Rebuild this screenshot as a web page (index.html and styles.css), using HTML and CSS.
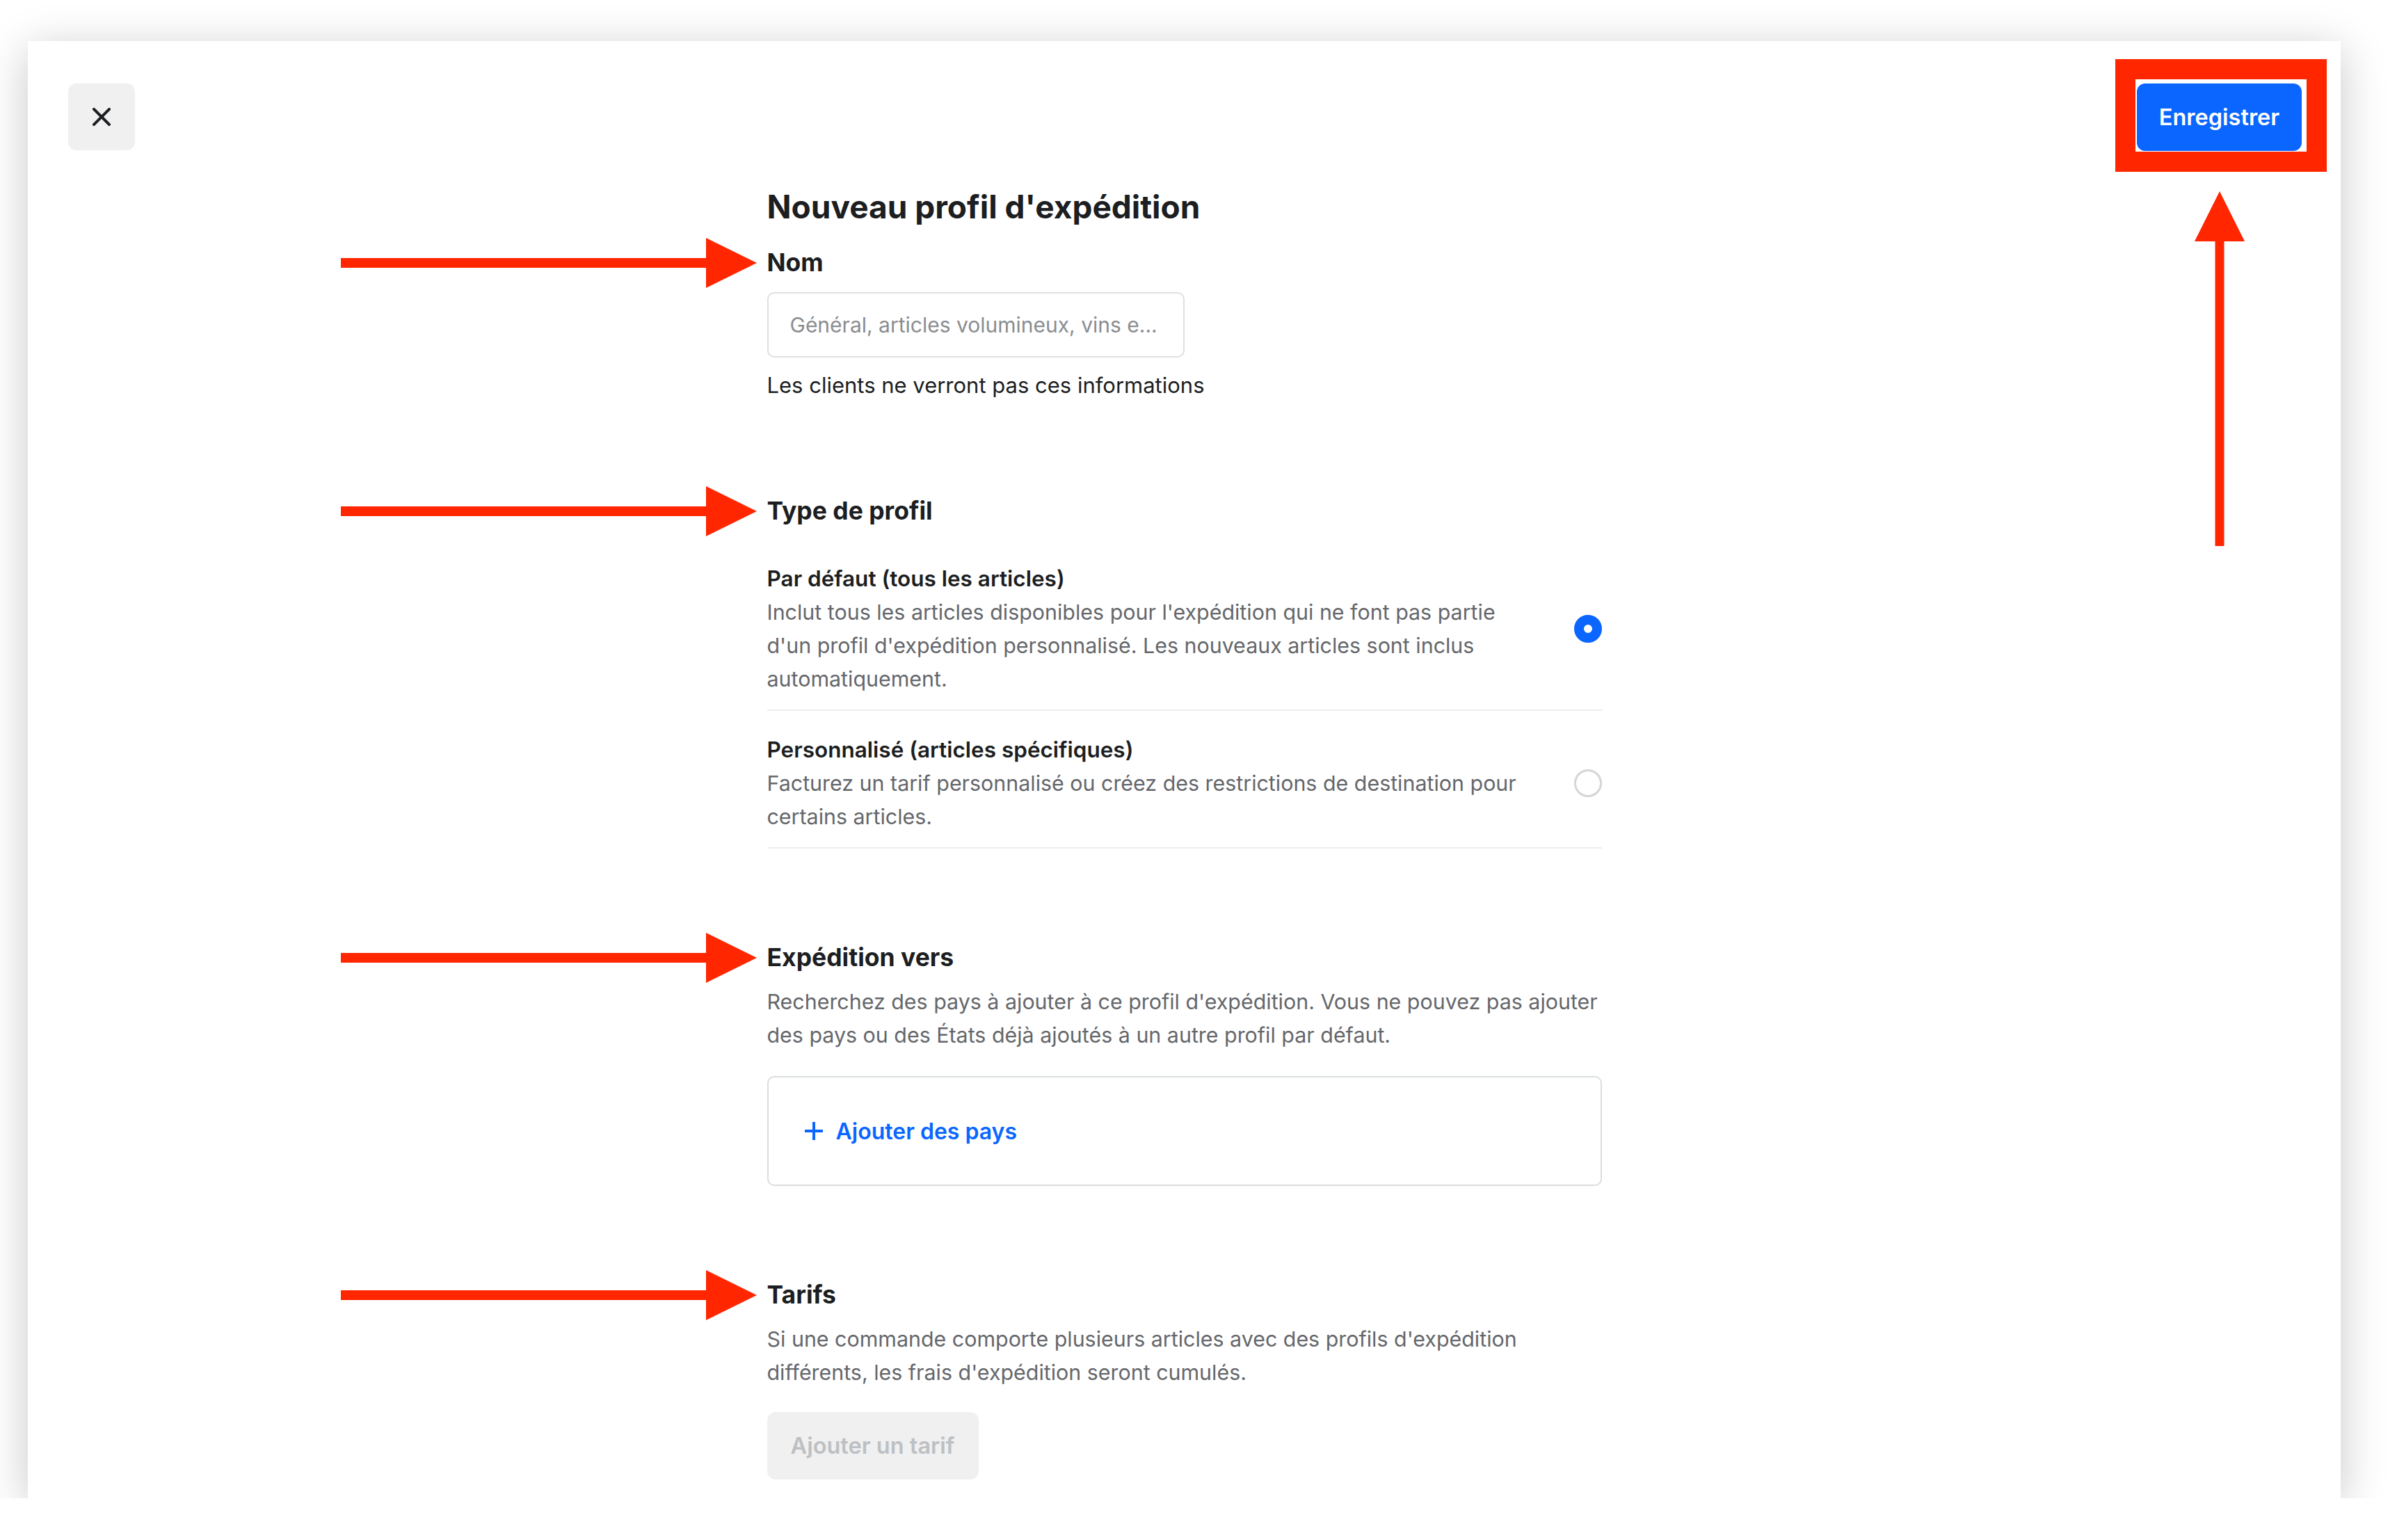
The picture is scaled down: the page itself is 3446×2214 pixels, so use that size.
FILE: index.html
```html
<!DOCTYPE html>
<html lang="fr">
<head>
  <meta charset="UTF-8" />
  <meta name="viewport" content="width=device-width, initial-scale=1.0"/>
  <title>Nouveau profil d'expédition</title>
  <link rel="stylesheet" href="styles.css">
</head>
<body>
  <div class="modal">
    <header class="topbar">
      <button class="close-btn" aria-label="Fermer">
        <svg width="26" height="26" viewBox="0 0 26 26">
          <path d="M2 2 L24 24 M24 2 L2 24" stroke="#1c1e21" stroke-width="4" stroke-linecap="square"/>
        </svg>
      </button>

      <div class="save-wrap">
        <button class="save-btn">Enregistrer</button>
        <span class="callout-frame"></span>
        <svg class="arrow-up" width="72" height="510" viewBox="0 0 72 510">
          <polygon points="36,0 72,72 0,72" fill="#ff2600"/>
          <rect x="29.5" y="70" width="13" height="440" fill="#ff2600"/>
        </svg>
      </div>
    </header>

    <main class="form">
      <h1 class="title">Nouveau profil d'expédition</h1>

      <label class="heading marked" for="profileName">
        <svg class="arrow-left" width="598" height="72" viewBox="0 0 598 72">
          <rect x="0" y="29" width="528" height="14" fill="#ff2600"/>
          <polygon points="525,0 598,36 525,72" fill="#ff2600"/>
        </svg>
        Nom
      </label>
      <input class="text-input" type="text" id="profileName" placeholder="Général, articles volumineux, vins e...">
      <p class="help">Les clients ne verront pas ces informations</p>

      <h2 class="heading marked section-top">
        <svg class="arrow-left" width="598" height="72" viewBox="0 0 598 72">
          <rect x="0" y="29" width="528" height="14" fill="#ff2600"/>
          <polygon points="525,0 598,36 525,72" fill="#ff2600"/>
        </svg>
        Type de profil
      </h2>

      <div class="option first">
        <div class="option-text">
          <div class="option-title">Par défaut (tous les articles)</div>
          <p class="desc">Inclut tous les articles disponibles pour l'expédition qui ne font pas partie d'un profil d'expédition personnalisé. Les nouveaux articles sont inclus automatiquement.</p>
        </div>
        <span class="radio checked"></span>
      </div>

      <div class="option">
        <div class="option-text">
          <div class="option-title">Personnalisé (articles spécifiques)</div>
          <p class="desc">Facturez un tarif personnalisé ou créez des restrictions de destination pour certains articles.</p>
        </div>
        <span class="radio"></span>
      </div>

      <h2 class="heading marked section-top">
        <svg class="arrow-left" width="598" height="72" viewBox="0 0 598 72">
          <rect x="0" y="29" width="528" height="14" fill="#ff2600"/>
          <polygon points="525,0 598,36 525,72" fill="#ff2600"/>
        </svg>
        Expédition vers
      </h2>
      <p class="desc section-desc">Recherchez des pays à ajouter à ce profil d'expédition. Vous ne pouvez pas ajouter des pays ou des États déjà ajoutés à un autre profil par défaut.</p>

      <div class="countries-box">
        <button class="link-btn">
          <svg width="28" height="28" viewBox="0 0 28 28">
            <path d="M14 1 V27 M1 14 H27" stroke="#0a66ff" stroke-width="4"/>
          </svg>
          Ajouter des pays
        </button>
      </div>

      <h2 class="heading marked section-top">
        <svg class="arrow-left" width="598" height="72" viewBox="0 0 598 72">
          <rect x="0" y="29" width="528" height="14" fill="#ff2600"/>
          <polygon points="525,0 598,36 525,72" fill="#ff2600"/>
        </svg>
        Tarifs
      </h2>
      <p class="desc section-desc">Si une commande comporte plusieurs articles avec des profils d'expédition différents, les frais d'expédition seront cumulés.</p>

      <button class="grey-btn" disabled>Ajouter un tarif</button>
    </main>
  </div>
</body>
</html>
```

FILE: styles.css
```css
*,
*::before,
*::after {
  margin: 0;
  padding: 0;
  box-sizing: border-box;
}

body {
  background: #fff;
  font-family: Inter, "Liberation Sans", Arial, sans-serif;
  color: #1c1e21;
  overflow: hidden;
}

.modal {
  width: 3325px;
  height: 2095px;
  margin: 59px 0 0 40px;
  background: #fff;
  box-shadow: 0 12px 60px rgba(0, 0, 0, 0.22);
  overflow: hidden;
}

.topbar {
  display: flex;
  justify-content: space-between;
  align-items: flex-start;
  padding: 61px 56px 0 58px;
}

.close-btn {
  width: 96px;
  height: 96px;
  border: none;
  border-radius: 12px;
  background: #f0f0f0;
  display: flex;
  align-items: center;
  justify-content: center;
}

.save-wrap {
  position: relative;
}

.save-btn {
  width: 237px;
  height: 97px;
  border: none;
  border-radius: 12px;
  background: #0a66ff;
  color: #fff;
  font-family: Inter, "Liberation Sans", Arial, sans-serif;
  font-size: 32.5px;
  font-weight: 600;
}

/* annotation frame round the save button */
.callout-frame {
  position: absolute;
  top: -35px;
  right: -36px;
  bottom: -30px;
  left: -31px;
  border: 29px solid #ff2600;
}

.arrow-up {
  position: absolute;
  top: calc(100% + 58px);
  left: 50%;
  margin-left: -36px;
}

.form {
  width: 1200px;
  margin: 0 auto;
}

.title {
  margin-top: 52px;
  font-size: 46px;
  line-height: 56px;
  font-weight: 700;
}

.heading {
  position: relative;
  display: block;
  font-size: 35.5px;
  line-height: 48px;
  font-weight: 700;
}

label.heading {
  margin-top: 29px;
}

.section-top {
  margin-top: 133px;
}

.arrow-left {
  position: absolute;
  right: calc(100% + 15px);
  top: 50%;
  margin-top: -36px;
}

.text-input {
  display: block;
  width: 600px;
  height: 94px;
  margin-top: 18px;
  padding: 0 31px;
  border: 2px solid #dddfe2;
  border-radius: 10px;
  font-family: Inter, "Liberation Sans", Arial, sans-serif;
  font-size: 30px;
  color: #1c1e21;
}

.text-input::placeholder {
  color: #8a8d91;
}

.help {
  margin-top: 16px;
  font-size: 31px;
  line-height: 48px;
}

.option {
  display: flex;
  align-items: center;
  justify-content: space-between;
  padding: 32px 0 20px;
  border-bottom: 2px solid #ebedf0;
}

.option.first {
  padding-top: 49px;
}

.option-text {
  width: 1100px;
}

.option-title {
  font-size: 31.5px;
  line-height: 48px;
  font-weight: 600;
}

.desc {
  font-size: 30.4px;
  line-height: 48px;
  color: #65676b;
}

.section-desc {
  margin-top: 15px;
}

.radio {
  flex: none;
  width: 40px;
  height: 40px;
  border-radius: 50%;
  border: 3px solid #d5d5d5;
}

.radio.checked {
  border: 14px solid #0a66ff;
  background: #fff;
}

.countries-box {
  height: 158px;
  margin-top: 35px;
  padding-left: 51px;
  border: 2px solid #dadde1;
  border-radius: 10px;
  display: flex;
  align-items: center;
}

.link-btn {
  display: flex;
  align-items: center;
  gap: 18px;
  border: none;
  background: none;
  color: #0a66ff;
  font-family: Inter, "Liberation Sans", Arial, sans-serif;
  font-size: 32px;
  font-weight: 600;
}

.grey-btn {
  display: block;
  width: 304px;
  height: 97px;
  margin-top: 33px;
  border: none;
  border-radius: 12px;
  background: #f0f0f0;
  color: #bcc0c4;
  font-family: Inter, "Liberation Sans", Arial, sans-serif;
  font-size: 32.5px;
  font-weight: 600;
}
```
